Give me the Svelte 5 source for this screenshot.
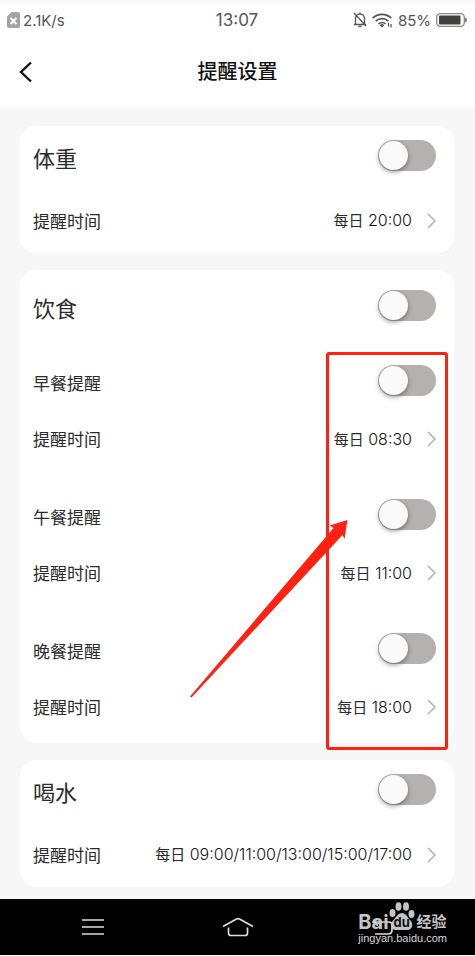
<script>
  let weight = $state({ on: false, time: '20:00' });
  let diet = $state({ on: false });
  let meals = $state([
    { id: 'breakfast', name: '早餐提醒', on: false, time: '08:30' },
    { id: 'lunch', name: '午餐提醒', on: false, time: '11:00' },
    { id: 'dinner', name: '晚餐提醒', on: false, time: '18:00' }
  ]);
  let water = $state({ on: false, time: '09:00/11:00/13:00/15:00/17:00' });
</script>

{#snippet timeRow(time)}
  <div class="time-row">
    <span class="label">提醒时间</span>
    <button class="time" type="button">
      <span><span class="daily">每日</span> {time}</span>
      <svg width="9" height="16" viewBox="0 0 9 16" aria-hidden="true">
        <path d="M1 1l7 7-7 7" fill="none" stroke="#b0b0b0" stroke-width="1.5" />
      </svg>
    </button>
  </div>
{/snippet}

<div class="screen">
  <div class="status">
    <div class="side">
      <svg width="13" height="16" viewBox="0 0 13 16" aria-hidden="true">
        <path d="M4.5 0H11a2 2 0 0 1 2 2v12a2 2 0 0 1-2 2H2a2 2 0 0 1-2-2V4.500z" fill="#a3a3a3" />
        <path d="M3.500 6l6 6M9.500 6l-6 6" stroke="#fff" stroke-width="2" />
      </svg>
      <span>2.1K/s</span>
    </div>
    <span class="clock">13:07</span>
    <div class="side end">
      <svg width="14" height="16" viewBox="0 0 14 16" fill="none" stroke="#555" stroke-width="1.3" aria-hidden="true">
        <path d="M2.500 12V6.500a4.500 4.500 0 0 1 9 0V12M1 12.500h12M7 .5v1.500M5.500 14.500h3M1 1l12 13" />
      </svg>
      <svg class="wifi" width="21" height="15" viewBox="0 0 21 15" fill="none" stroke="#555" stroke-width="1.700" aria-hidden="true">
        <path d="M.7 5.200a13 13 0 0 1 18.600 0M3.700 8.200a9 9 0 0 1 12.600 0M6.500 11a5 5 0 0 1 7 0" />
        <path d="M7.800 12.200a3 3 0 0 1 4.400 0L10 14.500z" fill="#555" stroke="none" />
        <path d="M16.500 10v3.500M19 11v3.500" stroke-width="1.300" />
      </svg>
      <span>85%</span>
      <svg class="battery" width="31" height="14" viewBox="0 0 31 14" aria-hidden="true">
        <rect x=".7" y=".7" width="27.600" height="12.600" rx="3.500" fill="none" stroke="#888" stroke-width="1.300" />
        <rect x="3" y="2.500" width="21.500" height="9" rx="1" fill="#40423c" />
        <path d="M29 4.500q2 .5 2 2.500t-2 2.500z" fill="#777" />
      </svg>
    </div>
  </div>

  <header>
    <button class="back" type="button" aria-label="返回">
      <svg width="14" height="22" viewBox="0 0 14 22" aria-hidden="true">
        <path d="M12 1.500L2 11l10 9.500" fill="none" stroke="#111" stroke-width="2.400" />
      </svg>
    </button>
    <h1>提醒设置</h1>
  </header>

  <main>
    <section class="card">
      <div class="switch-row">
        <label class="title" for="weight">体重</label>
        <input id="weight" type="checkbox" role="switch" bind:checked={weight.on} />
      </div>
      {@render timeRow(weight.time)}
    </section>

    <section class="card diet">
      <div class="switch-row">
        <label class="title" for="diet">饮食</label>
        <input id="diet" type="checkbox" role="switch" bind:checked={diet.on} />
      </div>
      <div class="meals">
        {#each meals as meal (meal.id)}
          <div class="meal">
            <div class="switch-row">
              <label class="label" for={meal.id}>{meal.name}</label>
              <input id={meal.id} type="checkbox" role="switch" bind:checked={meal.on} />
            </div>
            {@render timeRow(meal.time)}
          </div>
        {/each}
        <div class="frame"></div>
        <svg class="arrow" width="158" height="180" viewBox="0 0 158 180" aria-hidden="true">
          <path d="M157.500 1L139.500 6.500l4 2.500L0 177.500l1.500 1L152.500 16l2 4z" fill="#ff2213" />
        </svg>
      </div>
    </section>

    <section class="card">
      <div class="switch-row">
        <label class="title" for="water">喝水</label>
        <input id="water" type="checkbox" role="switch" bind:checked={water.on} />
      </div>
      {@render timeRow(water.time)}
    </section>
  </main>

  <nav>
    <button type="button" aria-label="菜单">
      <svg width="22" height="18" viewBox="0 0 22 18" stroke="#ddd" stroke-width="1.600" aria-hidden="true">
        <path d="M0 2h22M0 9h22M0 16h22" />
      </svg>
    </button>
    <button type="button" aria-label="主页">
      <svg width="32" height="20" viewBox="0 0 32 20" fill="none" stroke="#ddd" stroke-width="1.700" aria-hidden="true">
        <path d="M1 9.500L14.500 2q1.500-.8 3 0L31 9.500M6.500 10.500V16q0 2.500 2.500 2.500h14q2.500 0 2.500-2.500v-5.500" />
      </svg>
    </button>
    <button type="button" aria-label="后退">
      <svg width="22" height="18" viewBox="0 0 22 18" fill="none" stroke="#ddd" stroke-width="1.700" aria-hidden="true">
        <path d="M6 .5L1 4l5 3.500M1 4h16q3 0 3 3v5q0 4-4 4H3" />
      </svg>
    </button>
    <div class="mark">
      <div class="brand">
        <span class="bai">Bai</span>
        <span class="paw">
          <svg width="26" height="29" viewBox="0 0 26 29" fill="#c4c4c4" aria-hidden="true">
            <ellipse cx="3.500" cy="11" rx="3" ry="4" />
            <ellipse cx="9.500" cy="4.500" rx="3" ry="4.300" />
            <ellipse cx="17" cy="4.500" rx="3" ry="4.300" />
            <ellipse cx="22.500" cy="12" rx="3" ry="4" />
            <path d="M13 11c4 0 5 4 8.500 7.500 3.500 4 1.500 9.500-3 9.500H7c-5 0-6.500-5.500-3-9.500C7.500 15 9 11 13 11z" />
          </svg>
          <span class="du">du</span>
        </span>
        <span class="exp">经验</span>
      </div>
      <span class="site">jingyan.baidu.com</span>
    </div>
  </nav>
</div>

<style>
  :global(body) {
    margin: 0;
    background: #f7f7f7;
  }

  .screen {
    color: #2b2b2b;
    font-family: Inter, 'Noto Sans CJK SC', sans-serif;
    border-top: 3px solid #f7f7f7;
  }

  button {
    border: 0;
    padding: 0;
    background: none;
    color: inherit;
    font: inherit;
    cursor: pointer;
  }

  svg {
    display: block;
    flex: none;
  }

  .status {
    display: flex;
    align-items: center;
    height: 34px;
    padding: 0 8px 0 7px;
    background: #fff;
    color: #555;
    font-size: 15px;
  }

  .side {
    display: flex;
    flex: 1;
    align-items: center;
    gap: 3px;
  }

  .end {
    justify-content: flex-end;
    gap: 5px;
  }

  .clock {
    font-size: 17px;
  }

  header {
    display: grid;
    grid-template-columns: 24px 1fr 24px;
    align-items: center;
    height: 70px;
    padding: 0 19px;
    background: #fff;
  }

  h1 {
    margin: 0;
    color: #111;
    font-size: 20px;
    font-weight: 500;
    line-height: 28px;
    text-align: center;
  }

  main {
    display: flex;
    flex-direction: column;
    gap: 17px;
    padding: 19px 21px 12px 20px;
  }

  .card {
    padding: 0 18px 0 13px;
    border-radius: 16px;
    background: #fff;
  }

  .switch-row,
  .time-row {
    display: flex;
    align-items: center;
    justify-content: space-between;
  }

  .switch-row {
    height: 62px;
  }

  .time-row {
    height: 65px;
  }

  .diet {
    padding-bottom: 17px;
  }

  .diet .switch-row {
    height: 74px;
  }

  .meals {
    position: relative;
    display: flex;
    flex-direction: column;
    gap: 20px;
  }

  .diet .meal .switch-row {
    height: 76px;
  }

  .meal .time-row {
    height: 38px;
  }

  .title {
    padding-top: 4px;
    font-size: 22px;
    line-height: 32px;
  }

  .label {
    padding-top: 2px;
    font-size: 17px;
    line-height: 24px;
  }

  .switch-row .label {
    padding-top: 4px;
  }

  .time {
    display: flex;
    align-items: center;
    gap: 15px;
    color: #111;
    font-size: 16px;
    font-weight: 300;
    line-height: 24px;
  }

  .daily {
    color: #2b2b2b;
    font-size: 15px;
    font-weight: 400;
  }

  input {
    appearance: none;
    width: 58px;
    height: 31px;
    margin: 0 0 4px;
    padding: 1px;
    box-sizing: border-box;
    border-radius: 16px;
    background: #b5b1b0;
    cursor: pointer;
  }

  input::before {
    content: '';
    display: block;
    width: 29px;
    height: 29px;
    border-radius: 50%;
    background: #fafafa;
    box-shadow: 0 2px 5px rgba(0, 0, 0, 0.4);
  }

  input:checked {
    background: #4cc38a;
  }

  input:checked::before {
    margin-left: 27px;
  }

  .frame {
    position: absolute;
    top: 8px;
    right: -12px;
    width: 122px;
    height: 398px;
    box-sizing: border-box;
    border: 3px solid #ff2213;
    border-radius: 3px;
    pointer-events: none;
  }

  .arrow {
    position: absolute;
    top: 175px;
    right: 88px;
    pointer-events: none;
  }

  nav {
    position: relative;
    display: grid;
    grid-template-columns: repeat(3, 1fr);
    height: 56px;
    padding: 0 20px;
    background: #000;
  }

  nav button {
    display: flex;
    align-items: center;
    justify-content: center;
  }

  .mark {
    position: absolute;
    top: 4px;
    right: 28px;
    color: #c4c4c4;
    pointer-events: none;
  }

  .brand {
    display: flex;
    align-items: flex-end;
    height: 28px;
  }

  .bai {
    font-size: 20px;
    font-weight: 700;
    line-height: 18px;
  }

  .paw {
    position: relative;
  }

  .du {
    position: absolute;
    right: 0;
    bottom: 1px;
    left: 0;
    color: #111;
    font-size: 13px;
    font-weight: 700;
    line-height: 16px;
    text-align: center;
  }

  .exp {
    padding-left: 2px;
    font-size: 15px;
    font-weight: 700;
    line-height: 18px;
  }

  .site {
    display: block;
    color: #d8d8d8;
    font-family: 'Liberation Sans', sans-serif;
    font-size: 11px;
    line-height: 14px;
  }
</style>
